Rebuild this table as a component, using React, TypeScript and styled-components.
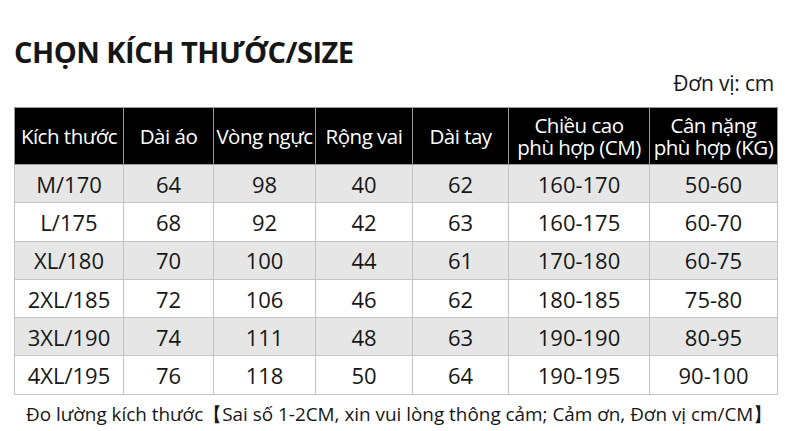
import React from 'react'
import styled, { createGlobalStyle } from 'styled-components'

const Global = createGlobalStyle`
  body {
    margin: 0;
    background: #ffffff;
    font-family: "Open Sans", "Noto Sans", sans-serif;
    color: #161616;
  }
`

const Page = styled.div`
  width: 790px;
  height: 431px;
  padding: 0 13px 0 14px;
  box-sizing: border-box;
  display: flex;
  flex-direction: column;
`

const Title = styled.h1`
  margin: 34px 0 0 0;
  font-size: 29px;
  line-height: 36px;
  font-weight: 700;
  letter-spacing: -0.5px;
`

const Unit = styled.div`
  align-self: flex-end;
  margin-top: -2px;
  font-size: 21px;
  font-weight: 500;
  line-height: 30px;
  padding-right: 3px;
  letter-spacing: -0.2px;
`

const Table = styled.table`
  margin-top: 9px;
  border-collapse: collapse;
  table-layout: fixed;
  width: 763px;
`

const HeadCell = styled.th`
  background: #000;
  color: #fff;
  font-weight: 500;
  font-size: 20.5px;
  line-height: 22px;
  height: 56px;
  padding: 0;
  text-align: center;
  border: 1px solid #9a9a9a;
  white-space: nowrap;
  letter-spacing: -0.5px;
`

const Row = styled.tr<{ $shade: boolean }>`
  background: ${p => (p.$shade ? '#e6e6e6' : '#ffffff')};
`

const Cell = styled.td`
  font-size: 22px;
  font-weight: 500;
  height: 37.3px;
  padding: 0;
  text-align: center;
  border: 1px solid #c4c4c4;
  line-height: 1;
`

const Note = styled.div`
  margin: 7px 0 0 12px;
  font-size: 18.9px;
  font-weight: 500;
  line-height: 24px;
  white-space: nowrap;
`

const widths = [109, 90, 102, 97, 96, 141, 128]

const heads = [
  'Kích thước',
  'Dài áo',
  'Vòng ngực',
  'Rộng vai',
  'Dài tay',
  'Chiều cao\nphù hợp (CM)',
  'Cân nặng\nphù hợp (KG)',
]

const rows = [
  ['M/170', '64', '98', '40', '62', '160-170', '50-60'],
  ['L/175', '68', '92', '42', '63', '160-175', '60-70'],
  ['XL/180', '70', '100', '44', '61', '170-180', '60-75'],
  ['2XL/185', '72', '106', '46', '62', '180-185', '75-80'],
  ['3XL/190', '74', '111', '48', '63', '190-190', '80-95'],
  ['4XL/195', '76', '118', '50', '64', '190-195', '90-100'],
]

const App: React.FC = () => {
  return (
    <>
      <Global />
      <Page>
        <Title>CHỌN KÍCH THƯỚC/SIZE</Title>
        <Unit>Đơn vị: cm</Unit>
        <Table>
          <colgroup>
            {widths.map((w, i) => (
              <col key={i} style={{ width: w }} />
            ))}
          </colgroup>
          <thead>
            <tr>
              {heads.map(h => (
                <HeadCell key={h}>
                  {h.split('\n').map((line, i) => (
                    <div key={i}>{line}</div>
                  ))}
                </HeadCell>
              ))}
            </tr>
          </thead>
          <tbody>
            {rows.map((r, i) => (
              <Row key={r[0]} $shade={i % 2 === 0}>
                {r.map((c, j) => (
                  <Cell key={j}>{c}</Cell>
                ))}
              </Row>
            ))}
          </tbody>
        </Table>
        <Note>Đo lường kích thước【Sai số 1-2CM, xin vui lòng thông cảm; Cảm ơn, Đơn vị cm/CM】</Note>
      </Page>
    </>
  )
}

export default App
